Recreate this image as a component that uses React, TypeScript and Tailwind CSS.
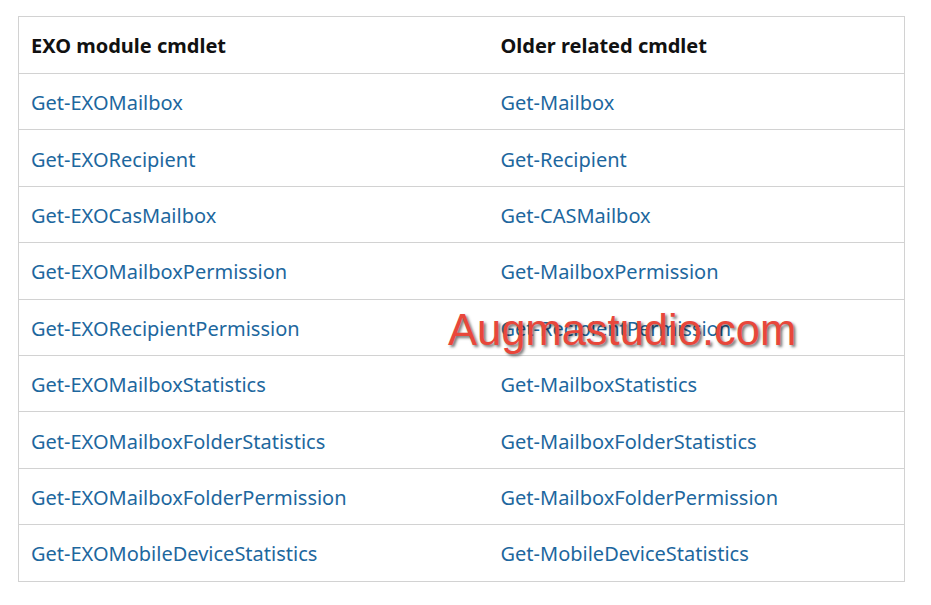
const rows: [string, string][] = [
  ["Get-EXOMailbox", "Get-Mailbox"],
  ["Get-EXORecipient", "Get-Recipient"],
  ["Get-EXOCasMailbox", "Get-CASMailbox"],
  ["Get-EXOMailboxPermission", "Get-MailboxPermission"],
  ["Get-EXORecipientPermission", "Get-RecipientPermission"],
  ["Get-EXOMailboxStatistics", "Get-MailboxStatistics"],
  ["Get-EXOMailboxFolderStatistics", "Get-MailboxFolderStatistics"],
  ["Get-EXOMailboxFolderPermission", "Get-MailboxFolderPermission"],
  ["Get-EXOMobileDeviceStatistics", "Get-MobileDeviceStatistics"],
];

export default function App() {
  return (
    <div className="relative h-[605px] w-[931px] bg-white pl-[18px] pt-[16px] font-['Noto_Sans',sans-serif]">
      <table className="w-[887px] table-fixed border-collapse border border-[#d2d2d2] text-[20px]">
        <colgroup>
          <col className="w-[470px]" />
          <col />
        </colgroup>
        <thead>
          <tr className="h-[57px] border-b border-[#d2d2d2]">
            <th className="px-[12px] pt-[2px] text-left font-bold text-[#111]">EXO module cmdlet</th>
            <th className="px-[12px] pt-[2px] text-left font-bold text-[#111]">Older related cmdlet</th>
          </tr>
        </thead>
        <tbody>
          {rows.map(([a, b]) => (
            <tr key={a} className="h-[56.4px] border-b border-[#d2d2d2]">
              <td className="px-[12px] pt-[3px] text-[#1d679e]">{a}</td>
              <td className="px-[12px] pt-[3px] text-[#1d679e]">{b}</td>
            </tr>
          ))}
        </tbody>
      </table>
      <div className="absolute left-[448px] top-[304px] font-['Liberation_Sans',sans-serif] text-[43.5px] leading-[52px] text-[#e8473b] [text-shadow:2px_2px_3px_rgba(0,0,0,0.55)]">
        Augmastudio.com
      </div>
    </div>
  );
}
